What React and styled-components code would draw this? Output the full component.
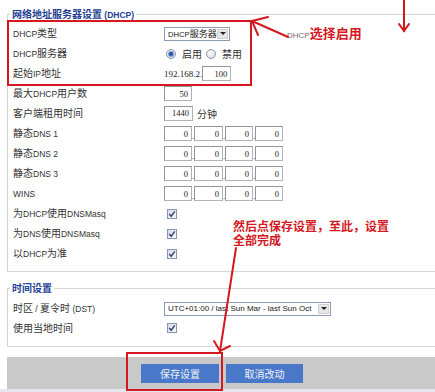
import React from 'react';
import styled, { createGlobalStyle } from 'styled-components';

const Global = createGlobalStyle`
  html, body { margin: 0; padding: 0; background: #fff; }
  body {
    width: 435px; height: 392px; overflow: hidden;
    font-family: "Noto Sans CJK SC", "Liberation Sans", sans-serif;
    color: #333;
  }
`;

const RED = '#d5181f';

const Page = styled.div`
  position: relative;
  width: 435px;
  height: 392px;
  overflow: hidden;
  padding-top: 7px;
  box-sizing: border-box;
`;

const Fieldset = styled.fieldset`
  margin: ${p => p.$top || 0}px 0 0 7px;
  padding: ${p => p.$pt}px 0 8px 5px;
  border: 1px solid #d6d6d6;
  border-right: none;
  width: 560px;
  min-width: 0;
`;

const Legend = styled.legend`
  padding: 0 2px;
  margin-left: -3px;
  height: 14px;
  line-height: 14px;
  font-size: 10px;
  font-weight: bold;
  color: #1f3f94;
  white-space: nowrap;
`;

const Row = styled.div`
  display: grid;
  grid-template-columns: 151px auto;
  height: 20px;
  align-items: center;
`;

const Label = styled.div`
  font-size: 10px;
  line-height: 20px;
  color: #333;
  white-space: nowrap;
`;

const Control = styled.div`
  display: flex;
  align-items: center;
  font-size: 10px;
  color: #333;
  white-space: nowrap;
`;

const Lat = styled.span`
  font-family: "Liberation Sans", sans-serif;
  font-size: 0.85em;
`;

const Field = styled.span`
  display: inline-flex;
  justify-content: flex-end;
  align-items: center;
  box-sizing: border-box;
  width: ${p => p.$w}px;
  height: 15px;
  border: 1px solid #b4b4b4;
  border-top-color: #959595;
  border-left-color: #959595;
  padding-right: 3px;
  font-family: "Liberation Serif", serif;
  font-size: 8.5px;
  color: #222;
  background: #fff;
`;

const Dot = styled.span`
  width: 2px;
  align-self: flex-end;
  margin-bottom: 1px;
  font-family: "Liberation Serif", serif;
  font-size: 8.5px;
  line-height: 8px;
  color: #222;
`;

const Prefix = styled.span`
  font-family: "Liberation Serif", serif;
  font-size: 9px;
  color: #222;
`;

const Unit = styled.span`
  margin-left: 4px;
`;

const CheckBox = styled.span`
  display: inline-flex;
  box-sizing: border-box;
  width: 10px;
  height: 10px;
  margin-left: 3px;
  border: 1px solid #8496b4;
  background: linear-gradient(135deg, #d8dbe2, #fafafa);
  align-items: center;
  justify-content: center;
`;

const Radio = styled.span`
  display: inline-flex;
  box-sizing: border-box;
  width: 10px;
  height: 10px;
  border-radius: 50%;
  border: 1px solid #8a98b0;
  background: radial-gradient(circle at 40% 35%, #fafafa, #d6d8de);
  align-items: center;
  justify-content: center;
  margin-left: ${p => p.$ml || 0}px;
  &::after {
    content: '';
    display: ${p => (p.$on ? 'block' : 'none')};
    width: 4px;
    height: 4px;
    border-radius: 50%;
    background: #2f54a0;
    box-shadow: 0 0 0 1px #7f9fd6;
  }
`;

const RadioText = styled.span`
  margin-left: ${p => p.$ml}px;
`;

const Select = styled.div`
  display: flex;
  align-items: center;
  box-sizing: border-box;
  width: ${p => p.$w}px;
  height: 14px;
  border: 1px solid #8c9bb3;
  background: #fff;
  padding-left: 3px;
  font-size: ${p => (p.$latin ? 8 : 9)}px;
  font-family: ${p => (p.$latin ? '"Liberation Sans", sans-serif' : 'inherit')};
  color: #222;
`;

const SelectText = styled.span`
  flex: 1;
  white-space: nowrap;
  overflow: hidden;
`;

const Drop = styled.span`
  display: flex;
  align-items: center;
  justify-content: center;
  width: 11px;
  height: 10px;
  margin-right: 1px;
  background: #e6e6e6;
  border: 1px solid #d0d0d0;
  box-sizing: border-box;
  &::after {
    content: '';
    border-left: 3px solid transparent;
    border-right: 3px solid transparent;
    border-top: 3px solid #222;
  }
`;

const Footer = styled.div`
  margin: 10px 0 0 7px;
  height: 32px;
  background: #c9c9c9;
  display: flex;
  align-items: center;
  gap: 7px;
  padding-left: 134px;
`;

const Btn = styled.div`
  width: ${p => p.$w}px;
  height: 19px;
  background: #4a78c8;
  color: #eef2fb;
  font-size: 10px;
  display: flex;
  align-items: center;
  justify-content: center;
`;

const BottomStrip = styled.div`
  height: 3px;
  background: #e4e8ee;
`;

const RedBox = styled.div`
  position: absolute;
  left: ${p => p.$x}px;
  top: ${p => p.$y}px;
  width: ${p => p.$w}px;
  height: ${p => p.$h}px;
  box-sizing: border-box;
  border: 2px solid ${RED};
  pointer-events: none;
`;

const Note = styled.div`
  position: absolute;
  left: ${p => p.$x}px;
  top: ${p => p.$y}px;
  color: ${RED};
  font-weight: bold;
  font-size: ${p => p.$fs}px;
  line-height: ${p => p.$lh}px;
  white-space: nowrap;
`;

const NoteLine = styled.div`
  height: ${p => p.$h}px;
`;

const NoteGrey = styled.span`
  font-family: "Liberation Sans", sans-serif;
  font-weight: normal;
  font-size: 8px;
  color: #7a6c6c;
`;

const Overlay = styled.svg`
  position: absolute;
  left: 0;
  top: 0;
  pointer-events: none;
`;

function Mixed({ text }) {
  const parts = text.split(/([\u0000-\u024f]+)/).filter(Boolean);
  return parts.map((p, i) =>
    /^[\u0000-\u024f]+$/.test(p) ? <Lat key={i}>{p}</Lat> : <React.Fragment key={i}>{p}</React.Fragment>
  );
}

const Check = () => (
  <CheckBox>
    <svg width="8" height="8" viewBox="0 0 8 8">
      <path d="M1.2 4 L3.2 6.2 L6.8 1.4" fill="none" stroke="#34457a" strokeWidth="1.5" />
    </svg>
  </CheckBox>
);

const IP4 = () => (
  <Control>
    <Field $w={28}>0</Field>
    <Dot>.</Dot>
    <Field $w={29}>0</Field>
    <Dot>.</Dot>
    <Field $w={28}>0</Field>
    <Dot>.</Dot>
    <Field $w={28}>0</Field>
  </Control>
);

const FormRow = ({ label, children }) => (
  <Row>
    <Label><Mixed text={label} /></Label>
    {children}
  </Row>
);

export default function App() {
  return (
    <>
      <Global />
      <Page>
        <Fieldset $pt={2}>
          <Legend><Mixed text="网络地址服务器设置 (DHCP)" /></Legend>
          <FormRow label="DHCP类型">
            <Control>
              <Select $w={66}>
                <SelectText><Mixed text="DHCP服务器" /></SelectText>
                <Drop />
              </Select>
            </Control>
          </FormRow>
          <FormRow label="DHCP服务器">
            <Control>
              <Radio $on $ml={2} />
              <RadioText $ml={6}>启用</RadioText>
              <Radio $ml={4} />
              <RadioText $ml={6}>禁用</RadioText>
            </Control>
          </FormRow>
          <FormRow label="起始IP地址">
            <Control>
              <Prefix>192.168.2.</Prefix>
              <Field $w={29}>100</Field>
            </Control>
          </FormRow>
          <FormRow label="最大DHCP用户数">
            <Control><Field $w={28}>50</Field></Control>
          </FormRow>
          <FormRow label="客户端租用时间">
            <Control>
              <Field $w={29}>1440</Field>
              <Unit>分钟</Unit>
            </Control>
          </FormRow>
          <FormRow label="静态DNS 1"><IP4 /></FormRow>
          <FormRow label="静态DNS 2"><IP4 /></FormRow>
          <FormRow label="静态DNS 3"><IP4 /></FormRow>
          <FormRow label="WINS"><IP4 /></FormRow>
          <FormRow label="为DHCP使用DNSMasq"><Control><Check /></Control></FormRow>
          <FormRow label="为DNS使用DNSMasq"><Control><Check /></Control></FormRow>
          <FormRow label="以DHCP为准"><Control><Check /></Control></FormRow>
        </Fieldset>

        <Fieldset $top={9} $pt={3}>
          <Legend>时间设置</Legend>
          <FormRow label="时区 / 夏令时 (DST)">
            <Control>
              <Select $w={167} $latin>
                <SelectText>UTC+01:00 / last Sun Mar - last Sun Oct</SelectText>
                <Drop />
              </Select>
            </Control>
          </FormRow>
          <FormRow label="使用当地时间"><Control><Check /></Control></FormRow>
        </Fieldset>

        <Footer>
          <Btn $w={78}>保存设置</Btn>
          <Btn $w={77}>取消改动</Btn>
        </Footer>
        <BottomStrip />

        <RedBox $x={7} $y={20} $w={245} $h={66} />
        <RedBox $x={126} $y={352} $w={97} $h={39} />

        <Note $x={287} $y={25} $fs={13} $lh={15}>
          <NoteGrey>DHCP</NoteGrey>选择启用
        </Note>
        <Note $x={233} $y={219} $fs={12} $lh={14}>
          <NoteLine $h={14}>然后点保存设置，至此，设置</NoteLine>
          <NoteLine $h={14}>全部完成</NoteLine>
        </Note>

        <Overlay width="435" height="392" viewBox="0 0 435 392">
          <g stroke={RED} strokeWidth="2" fill="none" strokeLinecap="round">
            <path d="M288 37 L252 21" />
            <path d="M268 17 L252 21 L258 35" />
            <path d="M404 0 L404 31" />
            <path d="M399 24 L404 31 L409 24" />
            <path d="M236 248 L220 351" />
            <path d="M214 341 L220 351 L230 346" />
          </g>
        </Overlay>
      </Page>
    </>
  );
}
